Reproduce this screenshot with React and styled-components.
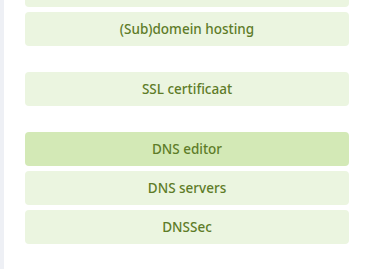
import React from 'react';
import styled, { createGlobalStyle } from 'styled-components';

const GlobalStyle = createGlobalStyle`
    html, body {
        margin: 0;
        padding: 0;
        background: #ffffff;
        overflow: hidden;
    }
`;

const Page = styled.div`
    display: flex;
    height: 269px;
    overflow: hidden;
    font-family: "Noto Sans", "Open Sans", sans-serif;
`;

const SideStrip = styled.div`
    width: 4px;
    flex-shrink: 0;
    background: #eef0f5;
`;

const Content = styled.div`
    display: flex;
    flex-direction: column;
    gap: 26px;
    padding-left: 21px;
    width: 324px;
    margin-top: -27px;
`;

const Group = styled.div`
    display: flex;
    flex-direction: column;
    gap: 5px;
`;

const MenuButton = styled.div`
    height: 34px;
    display: flex;
    align-items: center;
    justify-content: center;
    padding-bottom: 1px;
    box-sizing: border-box;
    border-radius: 4px;
    background: ${p => (p.$active ? '#d3e9b6' : '#ebf5e0')};
    color: #5e7c28;
    font-size: 13.5px;
    font-weight: 500;
    line-height: 16px;
`;

const groups = [
    [{ label: '' }, { label: '(Sub)domein hosting' }],
    [{ label: 'SSL certificaat' }],
    [{ label: 'DNS editor', active: true }, { label: 'DNS servers' }, { label: 'DNSSec' }]
];

const App = () => (
    <>
        <GlobalStyle />
        <Page>
            <SideStrip />
            <Content>
                {groups.map((items, i) => (
                    <Group key={i}>
                        {items.map((item, j) => (
                            <MenuButton key={j} $active={item.active}>
                                {item.label}
                            </MenuButton>
                        ))}
                    </Group>
                ))}
            </Content>
        </Page>
    </>
);

export default App;
